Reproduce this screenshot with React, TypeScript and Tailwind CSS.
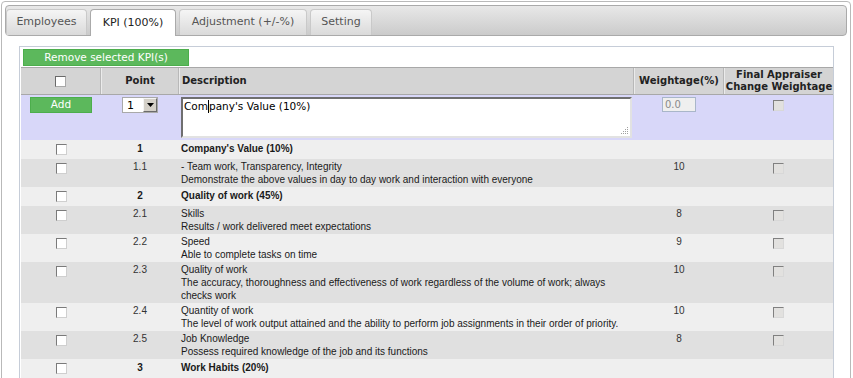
import React from "react";

type Row =
  | { kind: "g"; p: string; title: string }
  | { kind: "d"; p: string; lines: string[]; w: string };

const rows: Row[] = [
  { kind: "g", p: "1", title: "Company's Value (10%)" },
  {
    kind: "d",
    p: "1.1",
    lines: [
      "- Team work, Transparency, Integrity",
      "Demonstrate the above values in day to day work and interaction with everyone",
    ],
    w: "10",
  },
  { kind: "g", p: "2", title: "Quality of work (45%)" },
  { kind: "d", p: "2.1", lines: ["Skills", "Results / work delivered meet expectations"], w: "8" },
  { kind: "d", p: "2.2", lines: ["Speed", "Able to complete tasks on time"], w: "9" },
  {
    kind: "d",
    p: "2.3",
    lines: [
      "Quality of work",
      "The accuracy, thoroughness and effectiveness of work regardless of the volume of work; always",
      "checks work",
    ],
    w: "10",
  },
  {
    kind: "d",
    p: "2.4",
    lines: [
      "Quantity of work",
      "The level of work output attained and the ability to perform job assignments in their order of priority.",
    ],
    w: "10",
  },
  {
    kind: "d",
    p: "2.5",
    lines: ["Job Knowledge", "Possess required knowledge of the job and its functions"],
    w: "8",
  },
  { kind: "g", p: "3", title: "Work Habits (20%)" },
];

const COLS = "grid grid-cols-[80px_78px_455px_90px_109px]";

function Cb({ disabled }: { disabled?: boolean }) {
  return disabled ? (
    <span className="block w-[11px] h-[11px] border border-t-[#808080] border-l-[#808080] border-r-[#d8d8d8] border-b-[#d8d8d8] bg-[#e2e1df]" />
  ) : (
    <span className="block w-[11px] h-[11px] border border-t-[#7a7a7a] border-l-[#7a7a7a] border-r-[#cfcfcf] border-b-[#cfcfcf] bg-white" />
  );
}

function Tab({ label, width, active }: { label: string; width: string; active?: boolean }) {
  return active ? (
    <div
      className={`${width} h-[27px] -mb-[1px] flex items-center justify-center rounded-t-[4px] border border-b-0 border-[#aaaaaa] bg-white text-[#222] text-[11px]`}
    >
      {label}
    </div>
  ) : (
    <div
      className={`${width} h-[26px] flex items-center justify-center rounded-t-[4px] border border-b-0 border-[#c9c9c9] bg-gradient-to-b from-[#f5f5f5] to-[#dadada] text-[#555] text-[11px]`}
    >
      {label}
    </div>
  );
}

export default function App() {
  return (
    <div className="w-[853px] h-[378px] overflow-hidden bg-white font-['DejaVu_Sans',Verdana,sans-serif]">
      <div className="mt-[1px] ml-[1px] w-[850px] h-[420px] border border-[#b9b9b9] rounded-[4px] p-[3px]">
        {/* tab bar */}
        <div className="h-[31px] border border-[#aaaaaa] rounded-[4px] bg-gradient-to-b from-[#e8e8e8] to-[#cbcbcb] flex items-end gap-[3px]">
          <Tab label="Employees" width="w-[81px]" />
          <Tab label="KPI (100%)" width="w-[86px]" active />
          <Tab label="Adjustment (+/-%)" width="w-[128px]" />
          <Tab label="Setting" width="w-[62px]" />
        </div>

        {/* panel */}
        <div className="pt-[10px] pl-[14px]">
          <div className="w-[815px] h-[400px] border border-[#c6cdd8] px-[1px]">
            <div className="mt-[2px] ml-[2px] w-[166px] h-[17px] bg-[#5cb85c] border border-[#4cae4c] flex items-center justify-center text-white text-[10.5px]">
              Remove selected KPI(s)
            </div>

            <div className="mt-[1px] w-[812px]">
              {/* header */}
              <div className={`${COLS} h-[28px] border-t border-b border-[#a8a8a8] bg-[#d4d4d4] text-[#222] font-bold text-[10px] leading-[12px]`}>
                <div className="border-r border-r-[#b8b8b8] flex items-center justify-center">
                  <span className="block w-[11px] h-[11px] border border-t-[#6a6a6a] border-l-[#6a6a6a] border-r-[#a8a8a8] border-b-[#a8a8a8] bg-white" />
                </div>
                <div className="border-l border-l-[#ebebeb] border-r border-r-[#b8b8b8] flex items-center justify-center">
                  Point
                </div>
                <div className="border-l border-l-[#ebebeb] border-r border-r-[#b8b8b8] flex items-center pl-[2px]">
                  Description
                </div>
                <div className="border-l border-l-[#ebebeb] border-r border-r-[#b8b8b8] flex items-center justify-center">
                  Weightage(%)
                </div>
                <div className="border-l border-l-[#ebebeb] flex flex-col items-center justify-center text-center">
                  <span>Final Appraiser</span>
                  <span>Change Weightage</span>
                </div>
              </div>

              {/* add row */}
              <div className={`${COLS} h-[45px] bg-[#d8d7f9]`}>
                <div className="flex justify-center pt-[2px]">
                  <div className="w-[62px] h-[16px] bg-[#5cb85c] border border-[#4cae4c] flex items-center justify-center text-white text-[10.5px]">
                    Add
                  </div>
                </div>
                <div className="flex justify-center pt-[2px]">
                  <div className="w-[36px] h-[16px] bg-white border border-[#a9a9a9] flex items-center">
                    <span className="flex-1 pl-[4px] text-[11px] text-black leading-none">1</span>
                    <span className="w-[14px] h-[14px] bg-[#d4d0c8] border border-t-[#f4f4f4] border-l-[#f4f4f4] border-r-[#6b6b6b] border-b-[#6b6b6b] flex items-center justify-center">
                      <svg width="7" height="4" viewBox="0 0 7 4">
                        <path d="M0 0 H7 L3.5 4 Z" fill="#000" />
                      </svg>
                    </span>
                  </div>
                </div>
                <div className="pt-[2px] pl-[2px]">
                  <div className="relative w-[451px] h-[41px] bg-white border-2 border-t-[#6f6f6f] border-l-[#6f6f6f] border-r-[#e2e2e2] border-b-[#e2e2e2] text-[10.5px] text-black leading-[13px] pl-[1px] pt-[1px] whitespace-nowrap">
                    Com
                    <span className="inline-block w-px h-[13px] bg-black align-top" />
                    pany's Value (10%)
                    <svg className="absolute right-[1px] bottom-[1px]" width="8" height="8" viewBox="0 0 8 8">
                      <rect x="6" y="0" width="1" height="1" fill="#a0a0a0" />
                      <rect x="4" y="2" width="1" height="1" fill="#a0a0a0" />
                      <rect x="6" y="2" width="1" height="1" fill="#a0a0a0" />
                      <rect x="2" y="4" width="1" height="1" fill="#a0a0a0" />
                      <rect x="4" y="4" width="1" height="1" fill="#a0a0a0" />
                      <rect x="6" y="4" width="1" height="1" fill="#a0a0a0" />
                      <rect x="0" y="6" width="1" height="1" fill="#a0a0a0" />
                      <rect x="2" y="6" width="1" height="1" fill="#a0a0a0" />
                      <rect x="4" y="6" width="1" height="1" fill="#a0a0a0" />
                      <rect x="6" y="6" width="1" height="1" fill="#a0a0a0" />
                    </svg>
                  </div>
                </div>
                <div className="flex justify-center pt-[2px]">
                  <div className="w-[34px] h-[15px] bg-[#efefef] border border-[#a9b6c9] text-[10px] text-[#8a8a8a] leading-[13px] pl-[2px]">
                    0.0
                  </div>
                </div>
                <div className="flex justify-center pt-[5px]">
                  <Cb disabled />
                </div>
              </div>

              {/* body rows */}
              <div className="font-['Liberation_Sans',Arial,sans-serif] text-[10px] leading-[13px] text-[#1a1a1a]">
                {rows.map((r, i) => {
                  const bg = i % 2 === 0 ? "bg-[#efefef]" : "bg-[#e0e0e0]";
                  if (r.kind === "g") {
                    return (
                      <div key={i} className={`${COLS} h-[19px] ${bg} font-bold`}>
                        <div className="flex justify-center pt-[4px]">
                          <Cb />
                        </div>
                        <div className="text-center pt-[2px]">{r.p}</div>
                        <div className="pl-[2px] pt-[2px] whitespace-nowrap">{r.title}</div>
                        <div />
                        <div />
                      </div>
                    );
                  }
                  const h = r.lines.length === 3 ? "h-[41px]" : "h-[28px]";
                  return (
                    <div key={i} className={`${COLS} ${h} ${bg}`}>
                      <div className="flex justify-center pt-[4px]">
                        <Cb />
                      </div>
                      <div className="text-center pt-[1px] text-[#333]">{r.p}</div>
                      <div className="pl-[2px] pt-[1px] whitespace-nowrap">
                        {r.lines.map((l, j) => (
                          <div key={j}>{l}</div>
                        ))}
                      </div>
                      <div className="text-center pt-[1px] text-[#333]">{r.w}</div>
                      <div className="flex justify-center pt-[4px]">
                        <Cb disabled />
                      </div>
                    </div>
                  );
                })}
              </div>
            </div>
          </div>
        </div>
      </div>
    </div>
  );
}
